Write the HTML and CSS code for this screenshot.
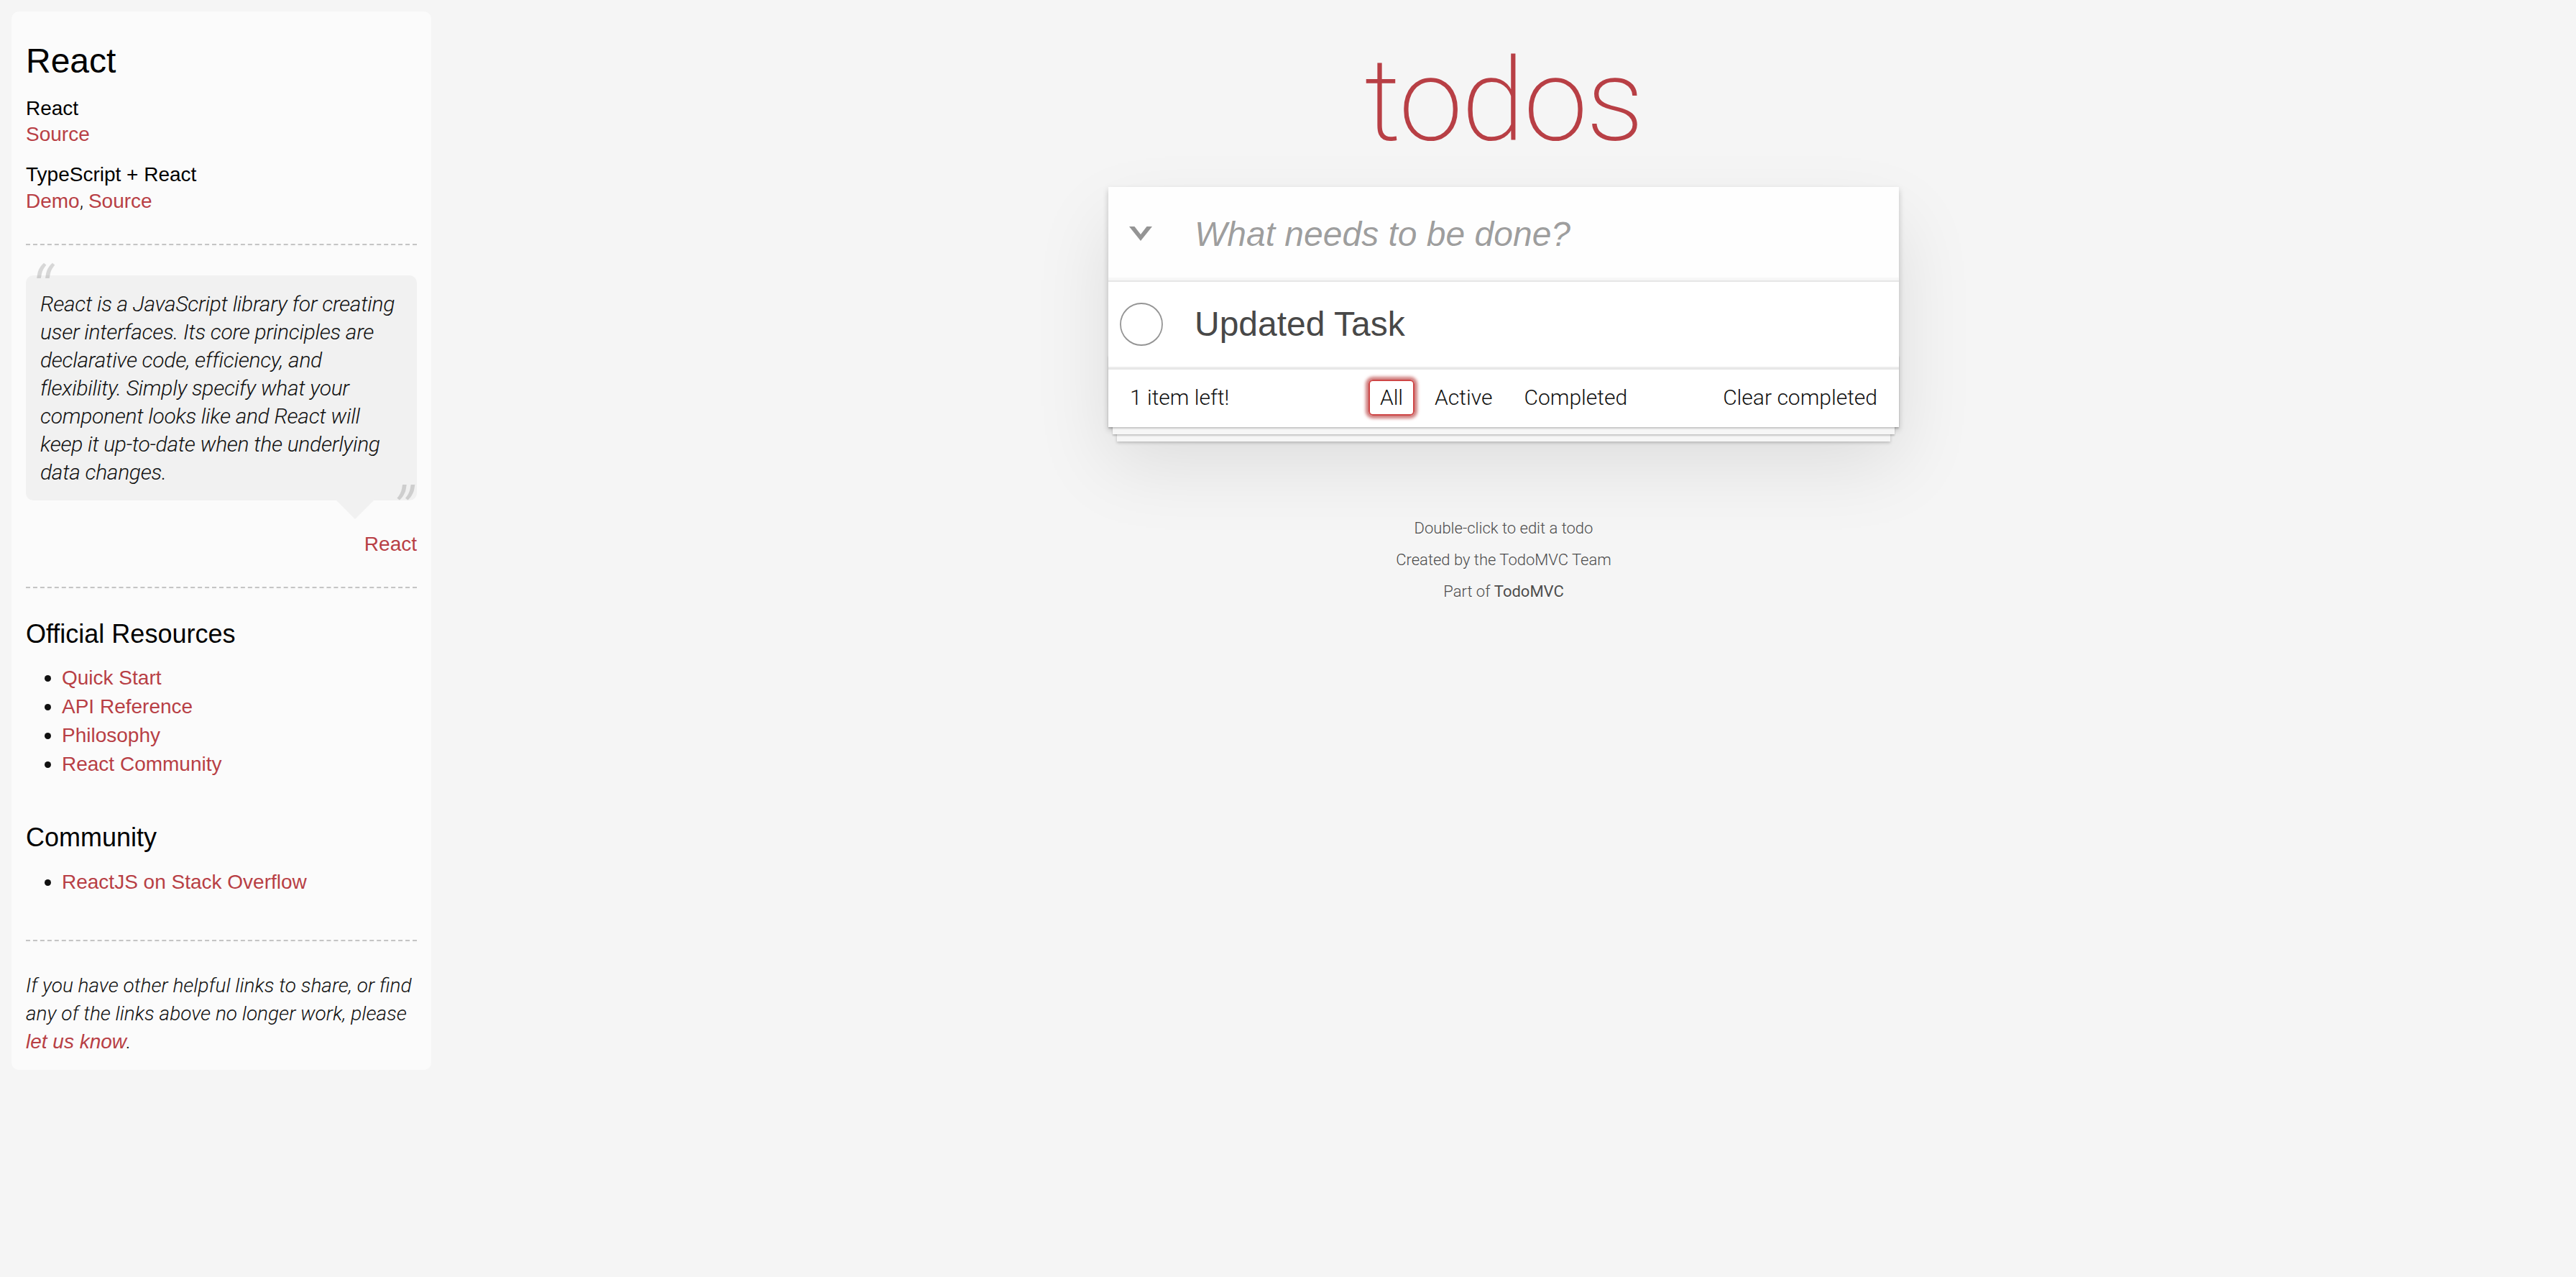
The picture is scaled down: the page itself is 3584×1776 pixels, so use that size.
FILE: index.html
```html
<!DOCTYPE html>
<html lang="en">
<head>
<meta charset="utf-8">
<title>React • TodoMVC</title>
<link rel="stylesheet" href="styles.css">
</head>
<body>
<div class="page">
  <aside class="learn">
    <header>
      <h3>React</h3>
      <div class="source-links">
        <h5>React</h5>
        <a href="#">Source</a>
        <h5>TypeScript + React</h5>
        <a href="#">Demo</a>, <a href="#">Source</a>
      </div>
    </header>
    <hr>
    <blockquote class="quote speech-bubble">
      <p>React is a JavaScript library for creating<br>user interfaces. Its core principles are<br>declarative code, efficiency, and<br>flexibility. Simply specify what your<br>component looks like and React will<br>keep it up-to-date when the underlying<br>data changes.</p>
      <footer><a href="#">React</a></footer>
    </blockquote>
    <hr>
    <h4>Official Resources</h4>
    <ul>
      <li><a href="#">Quick Start</a></li>
      <li><a href="#">API Reference</a></li>
      <li><a href="#">Philosophy</a></li>
      <li><a href="#">React Community</a></li>
    </ul>
    <h4>Community</h4>
    <ul>
      <li><a href="#">ReactJS on Stack Overflow</a></li>
    </ul>
    <footer class="learn-footer">
      <hr>
      <em>If you have other helpful links to share, or find any of the links above no longer work, please <a href="#">let us know</a>.</em>
    </footer>
  </aside>

  <main class="main-col">
    <h1 class="title">todos</h1>
    <section class="todoapp">
      <header class="header">
        <label class="toggle-all" aria-label="Mark all as complete">
          <svg width="32" height="20" viewBox="0 0 32 20"><path d="M0 0H7.5L16 11L24.5 0H32L16 20Z" fill="#949494"/></svg>
        </label>
        <input class="new-todo" placeholder="What needs to be done?">
      </header>
      <div class="main">
        <ul class="todo-list">
          <li class="todo-item">
            <span class="toggle">
              <svg width="60" height="60" viewBox="0 0 60 60"><circle cx="30" cy="30" r="29" fill="none" stroke="#949494" stroke-width="1.8"/></svg>
            </span>
            <label class="todo-label">Updated Task</label>
          </li>
        </ul>
      </div>
      <footer class="footer">
        <span class="todo-count">1 item left!</span>
        <ul class="filters">
          <li><a href="#" class="selected">All</a></li>
          <li><a href="#">Active</a></li>
          <li><a href="#">Completed</a></li>
        </ul>
        <button class="clear-completed">Clear completed</button>
      </footer>
    </section>
    <footer class="info">
      <p>Double-click to edit a todo</p>
      <p>Created by the TodoMVC Team</p>
      <p>Part of <a href="#">TodoMVC</a></p>
    </footer>
  </main>
</div>
</body>
</html>
```

FILE: styles.css
```css
* {
  box-sizing: border-box;
}

html,
body {
  margin: 0;
  padding: 0;
}

body {
  background: #f5f5f5;
  color: #111;
  font-family: Roboto, "Liberation Sans", Arial, sans-serif;
  font-size: 28px;
  line-height: 39.2px;
  font-weight: 300;
  -webkit-font-smoothing: antialiased;
}

.page {
  display: grid;
  grid-template-columns: 600px 1fr;
  align-items: start;
  min-height: 1776px;
}

/* ---------- sidebar ---------- */
.learn {
  margin: 16px 0 0 16px;
  width: 584px;
  padding: 20px;
  border-radius: 10px;
  background: rgba(255, 255, 255, 0.6);
}

.learn h3,
.learn h4,
.learn h5 {
  margin: 20px 0;
  font-family: "Liberation Sans", Arial, sans-serif;
  font-weight: 400;
  line-height: 1.2;
  color: #000;
}

.learn h3 {
  font-size: 48px;
}

.learn h4 {
  font-size: 36px;
}

.learn h5 {
  margin-bottom: 0;
  font-size: 28px;
}

.learn a {
  font-family: "Liberation Sans", Arial, sans-serif;
  font-weight: 400;
  color: #b83f45;
  text-decoration: none;
}

.learn hr {
  margin: 40px 0;
  height: 0;
  border: 0;
  border-top: 2px dashed #c5c5c5;
  border-bottom: 2px dashed #f7f7f7;
}

.learn ul {
  padding: 0;
  margin: 0 0 60px 50px;
}

.learn li {
  line-height: 40px;
}

.quote {
  position: relative;
  margin: 40px 0 120px 0;
  padding: 20px;
  border-radius: 10px;
  background: rgba(0, 0, 0, 0.04);
}

.quote::after {
  content: "";
  position: absolute;
  top: 100%;
  right: 60px;
  border: 26px solid transparent;
  border-top-color: rgba(0, 0, 0, 0.04);
}

.quote p {
  margin: 0;
  font-size: 30px;
  line-height: 1.3;
  font-style: italic;
  font-weight: 300;
  letter-spacing: -0.3px;
}

.quote p::before {
  content: "\201C";
  position: absolute;
  top: -40px;
  left: 6px;
  font-size: 100px;
  opacity: 0.15;
}

.quote p::after {
  content: "\201D";
  position: absolute;
  bottom: -84px;
  right: 6px;
  font-size: 100px;
  opacity: 0.15;
}

.quote footer {
  position: absolute;
  bottom: -80px;
  right: 0;
}

.learn-footer em {
  font-style: italic;
  font-weight: 300;
}

.learn-footer a {
  font-style: italic;
}

/* ---------- todo app ---------- */
.main-col {
  display: flex;
  flex-direction: column;
  align-items: center;
}

.title {
  margin: 0;
  width: 1100px;
  height: 260px;
  padding-top: 60px;
  text-align: center;
  font-size: 160px;
  line-height: 160px;
  font-weight: 200;
  letter-spacing: -1.5px;
  color: #b83f45;
  text-rendering: optimizeLegibility;
}

.todoapp {
  position: relative;
  width: 1100px;
  background: #fff;
  box-shadow: 0 4px 8px 0 rgba(0, 0, 0, 0.2),
              0 50px 100px 0 rgba(0, 0, 0, 0.1);
}

.header {
  display: flex;
  align-items: center;
  height: 130px;
  background: rgba(0, 0, 0, 0.003);
  box-shadow: inset 0 -4px 2px rgba(0, 0, 0, 0.03);
}

.toggle-all {
  flex: none;
  width: 90px;
  display: flex;
  justify-content: center;
}

.new-todo {
  flex: 1;
  min-width: 0;
  height: 130px;
  margin: 0;
  padding: 32px 32px 32px 30px;
  border: none;
  background: transparent;
  outline: none;
  font-family: "Liberation Sans", Arial, sans-serif;
  font-size: 48px;
  line-height: 1.4;
  color: #111;
}

.new-todo::placeholder {
  font-style: italic;
  font-weight: 400;
  color: rgba(0, 0, 0, 0.4);
}

.main {
  position: relative;
  z-index: 2;
  border-top: 2px solid #e6e6e6;
}

.todo-list {
  margin: 0;
  padding: 0;
  list-style: none;
}

.todo-item {
  display: flex;
  align-items: center;
  font-size: 48px;
  border-bottom: 2px solid #ededed;
}

.toggle {
  flex: none;
  width: 120px;
  display: flex;
  padding-left: 16px;
}

.todo-label {
  padding: 30px 30px 30px 0;
  line-height: 1.2;
  font-family: "Liberation Sans", Arial, sans-serif;
  font-weight: 400;
  color: #484848;
}

.footer {
  position: relative;
  display: grid;
  grid-template-columns: 1fr auto 1fr;
  align-items: center;
  height: 82px;
  padding: 14px 30px 26px;
  border-top: 2px solid #e6e6e6;
  font-size: 30px;
  line-height: 39.2px;
}

.footer::before {
  content: "";
  position: absolute;
  right: 0;
  bottom: 0;
  left: 0;
  height: 100px;
  overflow: hidden;
  pointer-events: none;
  box-shadow: 0 2px 2px rgba(0, 0, 0, 0.2),
              0 16px 0 -6px #f6f6f6,
              0 18px 2px -6px rgba(0, 0, 0, 0.2),
              0 32px 0 -12px #f6f6f6,
              0 34px 4px -12px rgba(0, 0, 0, 0.2);
}

.todo-count {
  justify-self: start;
}

.filters {
  display: flex;
  margin: 0;
  padding: 0;
  list-style: none;
}

.filters a {
  display: block;
  margin: 0 6px;
  padding: 6px 14px;
  line-height: 34px;
  border: 2px solid transparent;
  border-radius: 6px;
  color: inherit;
  text-decoration: none;
}

.filters a.selected {
  border-color: #ce4646;
  box-shadow: 0 0 4px 4px #cf7d7d;
}

.clear-completed {
  justify-self: end;
  margin: 0;
  padding: 0;
  border: 0;
  background: none;
  font: inherit;
  line-height: 38px;
  color: inherit;
}

.info {
  margin-top: 130px;
  font-size: 22px;
  color: #4d4d4d;
  text-align: center;
  text-shadow: 0 2px 0 rgba(255, 255, 255, 0.5);
}

.info p {
  margin: 0 0 22px;
  line-height: 1;
}

.info a {
  color: inherit;
  text-decoration: none;
  font-weight: 400;
}
```
